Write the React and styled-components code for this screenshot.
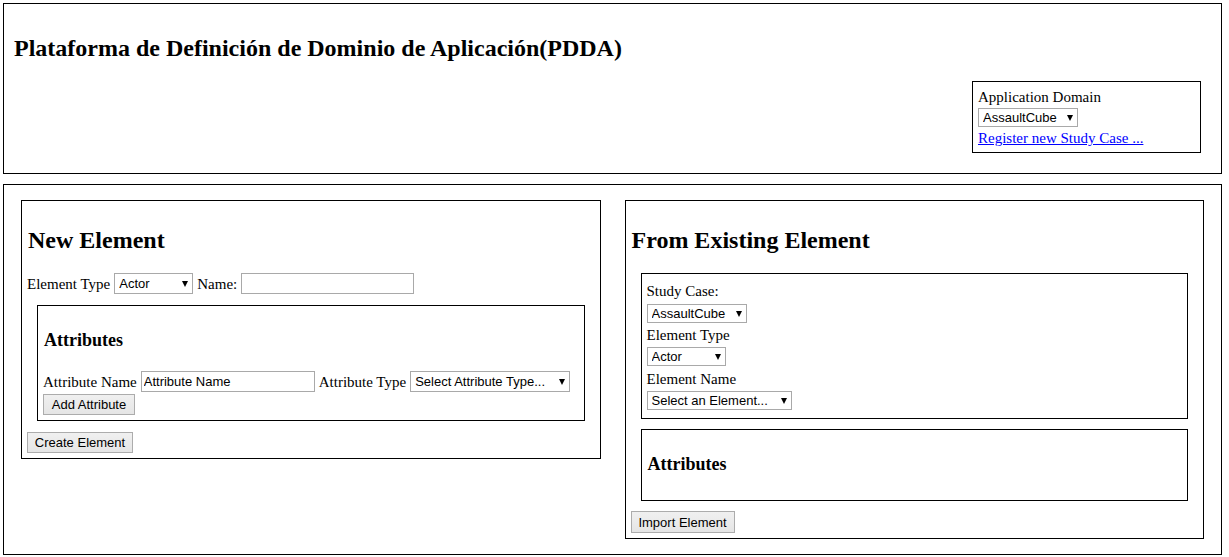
import React from "react"
import styled, { createGlobalStyle } from "styled-components"

const Global = createGlobalStyle`
  html, body { margin: 0; padding: 0; background: #fff; }
  body {
    font-family: "Liberation Serif", "Times New Roman", serif;
    font-size: 15px;
    color: #000;
  }
`

const Page = styled.div`
  padding: 3px 7px 2px 3px;
  display: flex;
  flex-direction: column;
  gap: 10px;
`

const Header = styled.header`
  border: 1px solid #000;
  padding: 10px;
  display: flex;
  flex-direction: column;
`

const Title = styled.h2`
  margin: 20px 0 19px;
  font-size: 24px;
  font-weight: bold;
  line-height: 28px;
`

const DomainBox = styled.div`
  align-self: flex-end;
  width: 217px;
  margin: 0 10px 10px 0;
  border: 1px solid #000;
  padding: 6px 5px 5px;
  display: flex;
  flex-direction: column;
  align-items: flex-start;
  gap: 2px;
  line-height: 17px;
`

const Link = styled.a`
  color: #0000ff;
  text-decoration: underline;
  line-height: 18px;
`

const Main = styled.main`
  border: 1px solid #000;
  padding: 15px 17px 15px;
  display: grid;
  grid-template-columns: 1fr 1fr;
  column-gap: 24px;
  align-items: start;
`

const Panel = styled.section`
  border: 1px solid #000;
  padding: 5px;
`

const PanelTitle = styled.h2`
  margin: 20px 1px 19px;
  font-size: 24px;
  line-height: 28px;
  font-weight: bold;
`

const Box = styled.div`
  border: 1px solid #000;
  margin: ${p => p.$margin || "0 10px"};
  padding: 5px;
`

const BoxTitle = styled.h3`
  margin: 19px 1px 20px;
  font-size: 18px;
  line-height: 21px;
  font-weight: bold;
`

const Row = styled.div`
  display: flex;
  align-items: center;
  gap: 4px;
  height: 21px;
  margin-top: ${p => p.$mt || 0}px;
`

const Label = styled.span`
  line-height: 18px;
  white-space: nowrap;
`

const FieldLabel = styled.div`
  line-height: 18px;
  margin-top: ${p => (p.$first ? 3 : 0)}px;
`

const SelectWrap = styled.span`
  position: relative;
  display: inline-flex;
  width: ${p => p.$w}px;
  height: ${p => p.$h || 19}px;
  margin: ${p => p.$margin || "0"};
`

const Select = styled.select`
  appearance: none;
  -webkit-appearance: none;
  width: 100%;
  height: 100%;
  box-sizing: border-box;
  border: 1px solid #a9a9a9;
  border-radius: 0;
  background: #fff;
  font-family: "Liberation Sans", Arial, sans-serif;
  font-size: 13px;
  color: #000;
  padding: 0 16px 0 4px;
  outline: none;
`

const Arrow = styled.span`
  position: absolute;
  right: 5px;
  top: 50%;
  transform: translateY(-50%);
  width: 0;
  height: 0;
  border-left: 3.5px solid transparent;
  border-right: 3.5px solid transparent;
  border-top: 6px solid #000;
  pointer-events: none;
`

const Input = styled.input`
  box-sizing: border-box;
  width: ${p => p.$w}px;
  height: 21px;
  border: 1px solid #a9a9a9;
  padding: 0 2px;
  font-family: "Liberation Sans", Arial, sans-serif;
  font-size: 13px;
  color: #000;
  outline: none;
`

const Button = styled.button`
  box-sizing: border-box;
  height: ${p => p.$h || 21}px;
  width: ${p => p.$w}px;
  margin: ${p => p.$margin || "0"};
  padding: 0;
  border: 1px solid #acacac;
  border-radius: 0;
  background: linear-gradient(#f0f0f0, #e5e5e5);
  font-family: "Liberation Sans", Arial, sans-serif;
  font-size: 13px;
  color: #000;
  display: block;
`

const Drop = ({ w, h, margin, children }) => (
  <SelectWrap $w={w} $h={h} $margin={margin}>
    <Select>{children}</Select>
    <Arrow />
  </SelectWrap>
)

export default function App() {
  return (
    <>
      <Global />
      <Page>
        <Header>
          <Title>Plataforma de Definición de Dominio de Aplicación(PDDA)</Title>
          <DomainBox>
            <Label>Application Domain</Label>
            <Drop w={100}>
              <option>AssaultCube</option>
            </Drop>
            <Link href="#">Register new Study Case ...</Link>
          </DomainBox>
        </Header>

        <Main>
          <Panel>
            <PanelTitle>New Element</PanelTitle>
            <Row>
              <Label>Element Type</Label>
              <Drop w={79} h={21}>
                <option>Actor</option>
              </Drop>
              <Label>Name:</Label>
              <Input $w={173} />
            </Row>
            <Box $margin="11px 10px 0">
              <BoxTitle>Attributes</BoxTitle>
              <Row $mt={1}>
                <Label>Attribute Name</Label>
                <Input $w={174} defaultValue="Attribute Name" />
                <Label>Attribute Type</Label>
                <Drop w={160} h={21}>
                  <option>Select Attribute Type...</option>
                </Drop>
              </Row>
              <Button $w={92} $margin="2px 0 0">Add Attribute</Button>
            </Box>
            <Button $w={106} $margin="11px 0 0">Create Element</Button>
          </Panel>

          <Panel>
            <PanelTitle>From Existing Element</PanelTitle>
            <Box>
              <FieldLabel $first>Study Case:</FieldLabel>
              <Drop w={100} margin="4px 0 3px">
                <option>AssaultCube</option>
              </Drop>
              <FieldLabel>Element Type</FieldLabel>
              <Drop w={79} margin="3px 0 4px">
                <option>Actor</option>
              </Drop>
              <FieldLabel>Element Name</FieldLabel>
              <Drop w={145} margin="3px 0 3px">
                <option>Select an Element...</option>
              </Drop>
            </Box>
            <Box $margin="10px 10px 0">
              <BoxTitle>Attributes</BoxTitle>
            </Box>
            <Button $w={104} $h={22} $margin="10px 0 0">Import Element</Button>
          </Panel>
        </Main>
      </Page>
    </>
  )
}
